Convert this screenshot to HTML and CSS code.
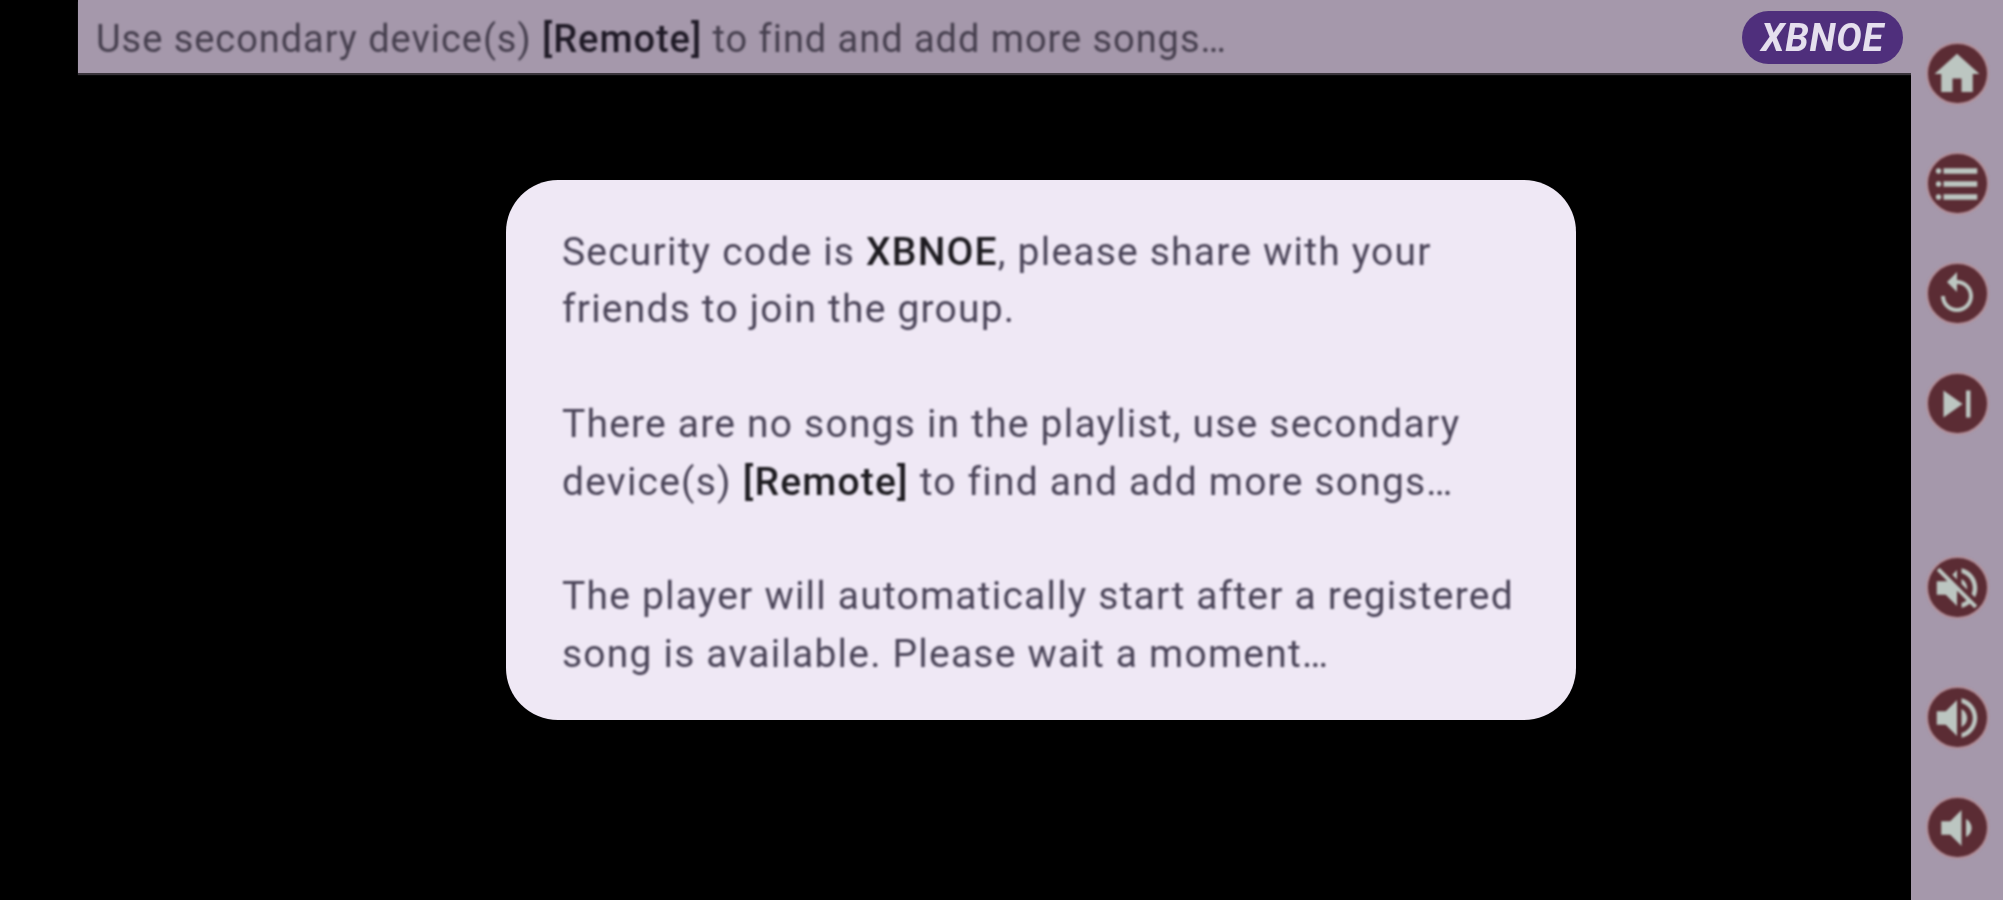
FILE: index.html
```html
<!DOCTYPE html>
<html lang="en">
<head>
    <meta charset="UTF-8">
    <meta name="viewport" content="width=device-width, initial-scale=1.0">
    <title>Player</title>
    <link rel="stylesheet" href="styles.css">
</head>
<body>
    <div class="player">
        <div class="main">
            <div class="top-bar">
                <span class="top-text">Use secondary device(s) <b>[Remote]</b> to find and add more songs…</span>
                <span class="code-pill">XBNOE</span>
            </div>
            <div class="stage">
                <div class="card">
                    <p>Security code is <b>XBNOE</b>, please share with your friends to join the group.</p>
                    <p>There are no songs in the playlist, use secondary device(s) <b>[Remote]</b> to find and add more songs…</p>
                    <p>The player will automatically start after a registered song is available. Please wait a moment…</p>
                </div>
            </div>
        </div>
        <div class="rail">
            <div class="rail-group">
                <button class="round-btn" aria-label="Home"><svg viewBox="0 0 24 24"><path d="M10 20v-6h4v6h5v-8h3L12 3 2 12h3v8z"/></svg></button>
                <button class="round-btn" aria-label="Playlist"><svg viewBox="0 0 24 24"><path d="M6 5h15v2.4H6zM6 10.8h15v2.4H6zM6 16.6h15v2.4H6z"/><circle cx="3.8" cy="6.2" r="1.2"/><circle cx="3.8" cy="12" r="1.2"/><circle cx="3.8" cy="17.8" r="1.2"/></svg></button>
                <button class="round-btn replay" aria-label="Replay"><svg viewBox="0 0 24 24"><path d="M12 5V1L7 6l5 5V7c3.31 0 6 2.69 6 6s-2.69 6-6 6-6-2.69-6-6H4c0 4.42 3.58 8 8 8s8-3.58 8-8-3.58-8-8-8z"/></svg></button>
                <button class="round-btn" aria-label="Next"><svg viewBox="0 0 24 24"><path d="M6 18l8.5-6L6 6v12zM16 6v12h2V6h-2z"/></svg></button>
            </div>
            <div class="rail-group volume">
                <button class="round-btn" aria-label="Mute"><svg viewBox="0 0 24 24"><path d="M16.5 12c0-1.77-1.02-3.29-2.5-4.03v2.21l2.45 2.45c.03-.2.05-.41.05-.63zm2.5 0c0 .94-.2 1.82-.54 2.64l1.51 1.51C20.63 14.91 21 13.5 21 12c0-4.28-2.99-7.86-7-8.77v2.06c2.89.86 5 3.54 5 6.71zM4.27 3L3 4.27 7.73 9H3v6h4l5 5v-6.73l4.25 4.25c-.67.52-1.42.93-2.25 1.18v2.06c1.38-.31 2.63-.95 3.69-1.81L19.73 21 21 19.73l-9-9L4.27 3zM12 4L9.91 6.09 12 8.18V4z"/></svg></button>
                <button class="round-btn up" aria-label="Volume up"><svg viewBox="0 0 24 24"><path d="M3 9v6h4l5 5V4L7 9H3zm13.5 3c0-1.77-1.02-3.29-2.5-4.03v8.05c1.48-.73 2.5-2.25 2.5-4.02zM14 3.23v2.06c2.89.86 5 3.54 5 6.71s-2.11 5.85-5 6.71v2.06c4.01-.91 7-4.49 7-8.77s-2.99-7.86-7-8.77z"/></svg></button>
                <button class="round-btn" aria-label="Volume down"><svg viewBox="0 0 24 24"><path d="M18.5 12c0-1.77-1.02-3.29-2.5-4.03v8.05c1.48-.73 2.5-2.25 2.5-4.02zM5 9v6h4l5 5V4L9 9H5z"/></svg></button>
            </div>
        </div>
    </div>
</body>
</html>
```

FILE: styles.css
```css
html, body {
    margin: 0;
    padding: 0;
    height: 100%;
    background: #000;
    overflow: hidden;
}
body {
    font-family: Roboto, "Liberation Sans", sans-serif;
}
.player {
    display: flex;
    height: 900px;
}
.main {
    flex: 1;
    padding-left: 78px;
    min-width: 0;
}
.top-bar {
    display: flex;
    align-items: center;
    justify-content: space-between;
    height: 73px;
    padding: 0 8px 0 18px;
    background: #a598ab;
    color: #463f4e;
    font-size: 38px;
    letter-spacing: 0.95px;
    box-shadow: 0 2px 1px rgba(165, 152, 171, 0.35);
}
.top-bar b {
    color: #1f1a26;
    font-weight: 500;
}
.top-text {
    padding-top: 4px;
    filter: blur(0.8px);
}
.code-pill {
    display: flex;
    align-items: center;
    justify-content: center;
    box-sizing: border-box;
    width: 161px;
    height: 53px;
    margin-top: 1px;
    padding-top: 2px;
    border-radius: 27px;
    background: #4f2f7c;
    color: #e5dfee;
    font-size: 38px;
    font-style: italic;
    font-weight: 700;
    letter-spacing: 0.8px;
    filter: blur(0.6px);
}
.stage {
    padding: 107px 0 0 428px;
}
.card {
    box-sizing: border-box;
    width: 1070px;
    height: 540px;
    padding: 44px 56px 0;
    border-radius: 52px;
    background: #efe8f5;
    color: #4a4458;
    font-size: 39px;
    letter-spacing: 1.2px;
    line-height: 57.4px;
}
.card p {
    margin: 0 0 57.4px;
    filter: blur(0.8px);
}
.card p:last-child {
    margin-bottom: 0;
}
.card b {
    color: #1d1b20;
    font-weight: 500;
}
.rail {
    width: 92px;
    padding: 42px 0 0 0;
    box-sizing: border-box;
    background: #a598ab;
    display: flex;
    flex-direction: column;
    align-items: center;
}
.rail-group {
    display: flex;
    flex-direction: column;
    gap: 47px;
}
.volume {
    margin-top: 121px;
}
.round-btn {
    display: flex;
    align-items: center;
    justify-content: center;
    box-sizing: border-box;
    width: 63px;
    height: 63px;
    padding: 0;
    border: 2px solid #b3909a;
    border-radius: 50%;
    background: #5b2c34;
    filter: blur(0.8px);
}
.round-btn svg {
    flex: none;
    width: 54px;
    height: 54px;
    fill: #bcc6c1;
}
.round-btn.replay svg {
    width: 48px;
    height: 48px;
}
.round-btn.up {
    margin-top: 20px;
}
```
